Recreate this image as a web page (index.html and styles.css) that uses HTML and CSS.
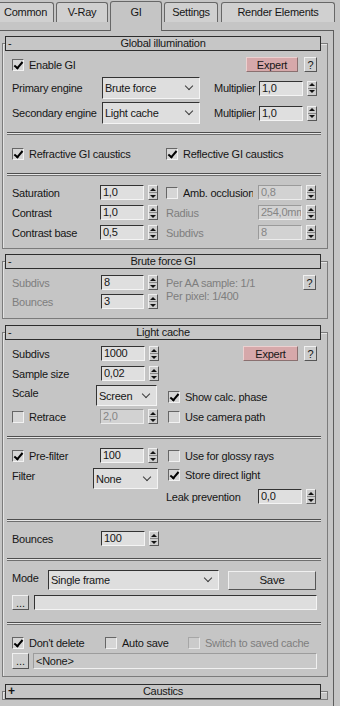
FILE: index.html
```html
<!DOCTYPE html>
<html lang="en">
<head>
<meta charset="UTF-8">
<meta name="viewport" content="width=device-width, initial-scale=1.0">
<title>V-Ray GI</title>
<link rel="stylesheet" href="styles.css">
</head>
<body>
<div class="tabs">
  <div class="tab t-common">Common</div>
  <div class="tab t-vray">V-Ray</div>
  <div class="tab active t-gi">GI</div>
  <div class="tab t-settings">Settings</div>
  <div class="tab t-re">Render Elements</div>
</div>

<div class="pane">

  <!-- Global illumination -->
  <section class="rollout r-gi">
    <div class="head"><span class="tog">-</span><span class="title">Global illumination</span></div>

    <div class="row mt6">
      <span class="cbx"><span class="cb on"></span>Enable GI</span>
      <span class="btn expert">Expert</span><span class="btn help">?</span>
    </div>
    <div class="row mt5">
      <span class="lbl">Primary engine</span>
      <span class="sel sel-engine">Brute force</span>
      <span class="mult">Multiplier</span>
      <span class="field"><span class="num">1,0</span><span class="spin"><i></i><i></i></span></span>
    </div>
    <div class="row mt3">
      <span class="lbl">Secondary engine</span>
      <span class="sel sel-engine">Light cache</span>
      <span class="mult">Multiplier</span>
      <span class="field"><span class="num">1,0</span><span class="spin"><i></i><i></i></span></span>
    </div>

    <div class="sep mt8"></div>

    <div class="grid mt12 h14">
      <span class="cbx span2"><span class="cb on"></span>Refractive GI caustics</span>
      <span class="cbx c3 span2"><span class="cb on"></span>Reflective GI caustics</span>
    </div>

    <div class="sep mt12"></div>

    <div class="grid mt9">
      <span>Saturation</span>
      <span class="field"><span class="num">1,0</span><span class="spin"><i></i><i></i></span></span>
      <span class="cbx c3"><span class="cb"></span><span class="clip">Amb. occlusion</span></span>
      <span class="field"><span class="num dis">0,8</span><span class="spin"><i></i><i></i></span></span>
    </div>
    <div class="grid mt5">
      <span>Contrast</span>
      <span class="field"><span class="num">1,0</span><span class="spin"><i></i><i></i></span></span>
      <span class="c3 dim">Radius</span>
      <span class="field"><span class="num dis">254,0mm</span><span class="spin"><i></i><i></i></span></span>
    </div>
    <div class="grid mt5">
      <span>Contrast base</span>
      <span class="field"><span class="num">0,5</span><span class="spin"><i></i><i></i></span></span>
      <span class="c3 dim">Subdivs</span>
      <span class="field"><span class="num dis">8</span><span class="spin"><i></i><i></i></span></span>
    </div>
  </section>

  <!-- Brute force GI -->
  <section class="rollout r-bf">
    <div class="head"><span class="tog">-</span><span class="title">Brute force GI</span></div>

    <div class="grid bf mt6">
      <span class="dim">Subdivs</span>
      <span class="field"><span class="num">8</span><span class="spin"><i></i><i></i></span></span>
      <span class="c3 dim per">Per AA sample: 1/1<br>Per pixel: 1/400</span>
      <span class="btn help right">?</span>
      <span class="dim">Bounces</span>
      <span class="field"><span class="num">3</span><span class="spin"><i></i><i></i></span></span>
    </div>
  </section>

  <!-- Light cache -->
  <section class="rollout r-lc">
    <div class="head"><span class="tog">-</span><span class="title">Light cache</span></div>

    <div class="row mt6">
      <span class="lbl">Subdivs</span>
      <span class="field"><span class="num">1000</span><span class="spin"><i></i><i></i></span></span>
      <span class="btn expert wide">Expert</span><span class="btn help">?</span>
    </div>
    <div class="row mt5">
      <span class="lbl">Sample size</span>
      <span class="field"><span class="num">0,02</span><span class="spin"><i></i><i></i></span></span>
    </div>
    <div class="grid lc mt4">
      <span class="top">Scale</span>
      <span class="sel sel-scale">Screen</span>
      <span class="cbx c3 span2 low"><span class="cb on"></span>Show calc. phase</span>
    </div>
    <div class="grid lc mt3">
      <span class="cbx"><span class="cb"></span>Retrace</span>
      <span class="field"><span class="num dis">2,0</span><span class="spin"><i></i><i></i></span></span>
      <span class="cbx c3 span2"><span class="cb"></span>Use camera path</span>
    </div>

    <div class="sep mt12"></div>

    <div class="grid lc mt9">
      <span class="cbx"><span class="cb on"></span>Pre-filter</span>
      <span class="field"><span class="num">100</span><span class="spin"><i></i><i></i></span></span>
      <span class="cbx c3 span2"><span class="cb"></span>Use for glossy rays</span>
    </div>
    <div class="grid lc mt5">
      <span class="top">Filter</span>
      <span class="sel sel-filter">None</span>
      <span class="cbx c3 span2 high"><span class="cb on"></span>Store direct light</span>
    </div>
    <div class="row">
      <span class="leak">Leak prevention</span>
      <span class="field"><span class="num">0,0</span><span class="spin"><i></i><i></i></span></span>
    </div>

    <div class="sep mt15"></div>

    <div class="row mt9">
      <span class="lbl">Bounces</span>
      <span class="field"><span class="num">100</span><span class="spin"><i></i><i></i></span></span>
    </div>

    <div class="sep mt12"></div>

    <div class="row mt9 mode">
      <span class="lbl-mode">Mode</span>
      <span class="sel sel-mode">Single frame</span>
      <span class="btn save">Save</span>
    </div>
    <div class="row mt5">
      <span class="btn dots">...</span>
      <span class="path"></span>
    </div>

    <div class="sep mt12"></div>

    <div class="row mt11 h13">
      <span class="cbx w93"><span class="cb on"></span>Don't delete</span>
      <span class="cbx w83"><span class="cb"></span>Auto save</span>
      <span class="cbx dim"><span class="cb dis"></span>Switch to saved cache</span>
    </div>
    <div class="row mt4">
      <span class="btn dots tall">...</span>
      <span class="path none">&lt;None&gt;</span>
    </div>
  </section>

  <!-- Caustics (collapsed) -->
  <section class="rollout r-ca">
    <div class="head"><span class="tog plus">+</span><span class="title">Caustics</span></div>
  </section>

</div>
</body>
</html>
```

FILE: styles.css
```css
* {
  box-sizing: border-box;
}
body {
  margin: 0;
  width: 340px;
  height: 706px;
  overflow: hidden;
  background: #c5c5c5;
  color: #161616;
  font-family: "Liberation Sans", Arial, sans-serif;
  font-size: 11px;
  letter-spacing: -0.25px;
}

/* tabs */
.tabs {
  display: flex;
  align-items: flex-start;
  height: 30px;
}
.tab {
  height: 20px;
  margin-top: 2px;
  margin-right: 2px;
  border: 1px solid #676767;
  border-bottom: none;
  border-radius: 3px 3px 0 0;
  background: #d0d0d0;
  text-align: center;
  line-height: 19px;
  white-space: nowrap;
}
.tab.active {
  position: relative;
  z-index: 1;
  height: 30px;
  margin-top: 1px;
  background: #c5c5c5;
  line-height: 21px;
}
.t-common { width: 57px; margin-left: -3px; }
.t-vray { width: 52px; }
.t-gi { width: 52px; }
.t-settings { width: 54px; margin-right: 3px; }
.t-re { width: 114px; }

.pane {
  width: 334px;
  height: 676px;
  border-top: 1px solid #5c5c5c;
  border-right: 1px solid #5c5c5c;
  padding: 12px 0 0 2px;
}

/* rollouts */
.rollout {
  width: 326px;
  border: 1px solid #7b7b7b;
  box-shadow: inset 1px 1px 0 #e4e4e4;
  padding: 0 10px 0 9px;
}
.r-gi { padding-bottom: 8px; }
.r-bf { margin-top: 12px; padding-bottom: 9px; }
.r-lc { margin-top: 13px; padding-bottom: 7px; }
.r-ca { margin-top: 14px; height: 9px; }

.head {
  display: grid;
  grid-template-columns: 14px 1fr 14px;
  height: 15px;
  margin: -8px -4px 0 -7px;
  border: 1px solid #2d2d2d;
  background: #c6c6c6;
  line-height: 13px;
}
.tog {
  padding-left: 2px;
}
.tog.plus {
  font-weight: bold;
  font-size: 12px;
}
.title {
  text-align: center;
}

.sep {
  height: 3px;
  margin: 0 -4px 0 -5px;
  border-top: 1px solid #4e4e4e;
  border-bottom: 1px solid #6e6e6e;
  background: #e6e6e6;
}

.mt3 { margin-top: 3px; }
.mt4 { margin-top: 4px; }
.mt5 { margin-top: 5px; }
.mt6 { margin-top: 6px; }
.mt8 { margin-top: 8px; }
.mt9 { margin-top: 9px; }
.mt11 { margin-top: 11px; }
.mt12 { margin-top: 12px; }
.mt15 { margin-top: 15px; }
.h13 { height: 13px; }
.h14 { height: 14px; }

.row {
  display: flex;
  align-items: center;
}
.lbl {
  width: 89px;
  flex: none;
}
.mult {
  width: 45px;
  margin-left: 14px;
}

.grid {
  display: grid;
  grid-template-columns: 88px 58px 100px 59px;
  align-items: center;
}
.grid .c3 {
  padding-left: 8px;
}
.grid.lc .c3 {
  padding-left: 10px;
}
.span2 {
  grid-column: span 2;
}
.clip {
  display: block;
  width: 70px;
  overflow: hidden;
  white-space: nowrap;
}
.dim {
  color: #7e7e7e;
}
.top {
  align-self: start;
  padding-top: 2px;
}
.low {
  padding-top: 2px;
}
.high {
  align-self: start;
  padding-top: 1px;
}
.leak {
  width: 92px;
  margin-left: 154px;
  white-space: nowrap;
}

.grid.bf {
  grid-template-rows: 15px 15px;
  row-gap: 4px;
}
.bf .field {
  margin-left: 1px;
}
.per {
  grid-row: 1 / 3;
  grid-column: 3;
  align-self: start;
  line-height: 13px;
  padding-top: 2px;
}
.right {
  grid-column: 4;
  justify-self: end;
  margin-right: 1px;
}

/* controls */
.field {
  display: flex;
  gap: 4px;
}
.num {
  width: 44px;
  height: 15px;
  padding: 0 2px;
  border: 1px solid;
  border-color: #333 #f4f4f4 #f4f4f4 #333;
  background: #dfdfdf;
  line-height: 13px;
  overflow: hidden;
  white-space: nowrap;
}
.num.dis {
  border-color: #9a9a9a #ececec #ececec #9a9a9a;
  background: #d2d2d2;
  color: #858585;
}
.spin {
  display: flex;
  flex-direction: column;
  width: 10px;
  height: 15px;
  border: 1px solid;
  border-color: #efefef #575757 #575757 #efefef;
  background: #cdcdcd;
}
.spin i {
  flex: 1;
  display: flex;
  align-items: center;
  justify-content: center;
}
.spin i:first-child {
  border-bottom: 1px solid #8a8a8a;
}
.spin i::before {
  content: "";
  border-left: 3px solid transparent;
  border-right: 3px solid transparent;
}
.spin i:first-child::before {
  border-bottom: 3px solid #111;
}
.spin i:last-child::before {
  border-top: 3px solid #111;
}

.sel {
  display: flex;
  align-items: center;
  height: 22px;
  padding-left: 2px;
  border: 1px solid;
  border-color: #333 #f4f4f4 #f4f4f4 #333;
  background: #dedede;
  white-space: nowrap;
}
.sel::after {
  content: "";
  width: 5px;
  height: 5px;
  margin: -4px 7px 0 auto;
  border: solid #3c3c3c;
  border-width: 0 1px 1px 0;
  transform: rotate(45deg);
}
.sel-engine { width: 98px; margin-left: 1px; height: 22px; }
.sel-scale { width: 61px; height: 21px; margin-left: -4px; }
.sel-filter { width: 65px; height: 21px; margin-left: -7px; }
.sel-mode { width: 171px; height: 20px; }

.cbx {
  display: flex;
  align-items: center;
  gap: 5px;
  white-space: nowrap;
}
.cb {
  flex: none;
  width: 12px;
  height: 12px;
  border: 1px solid;
  border-color: #666 #f2f2f2 #f2f2f2 #666;
  background: #d6d6d6;
}
.cb.on::after {
  content: "";
  display: block;
  width: 3px;
  height: 7px;
  margin: 0 0 0 3px;
  border: solid #000;
  border-width: 0 2px 2px 0;
  transform: rotate(40deg);
}
.cb.dis {
  border-color: #a6a6a6 #e6e6e6 #e6e6e6 #a6a6a6;
  background: #cbcbcb;
}
.w93 { width: 93px; }
.w83 { width: 83px; }

.btn {
  display: flex;
  align-items: center;
  justify-content: center;
  height: 15px;
  border: 1px solid;
  border-color: #f0f0f0 #555 #555 #f0f0f0;
  background: #cdcdcd;
}
.expert {
  width: 52px;
  margin-left: auto;
  border-color: #ecd0d0 #8a7070 #8a7070 #ecd0d0;
  background: #d6a8aa;
}
.expert.wide {
  width: 55px;
}
.help {
  width: 13px;
  margin-left: 6px;
}
.right.help {
  margin-left: 0;
}
.save {
  width: 88px;
  height: 19px;
  margin-left: 9px;
  font-size: 11.5px;
}
.lbl-mode {
  width: 36px;
  align-self: start;
  padding-top: 2px;
}
.dots {
  width: 17px;
  letter-spacing: 0;
  line-height: 10px;
}
.dots.tall {
  height: 16px;
}
.path {
  flex: 1;
  height: 15px;
  margin-left: 5px;
  border: 1px solid;
  border-color: #333 #f4f4f4 #f4f4f4 #333;
  background: #dedede;
}
.path.none {
  height: 16px;
  margin-left: 4px;
  padding-left: 2px;
  border-color: #9c9c9c #f0f0f0 #f0f0f0 #9c9c9c;
  background: #c9c9c9;
  line-height: 14px;
}
```
